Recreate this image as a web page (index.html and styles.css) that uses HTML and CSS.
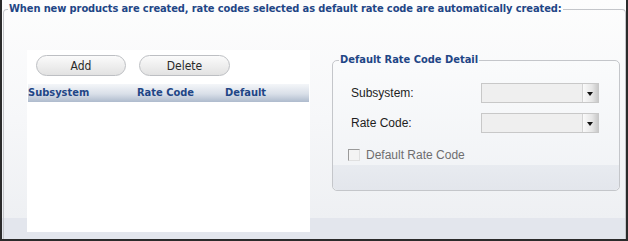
FILE: index.html
```html
<!DOCTYPE html>
<html lang="en">
<head>
    <meta charset="UTF-8">
    <title>Default Rate Codes</title>
    <link rel="stylesheet" href="styles.css">
</head>
<body>
    <div class="frame">
        <fieldset class="group">
            <legend>When new products are created, rate codes selected as default rate code are automatically created:</legend>

            <div class="columns">
                <!-- list of default rate codes -->
                <div class="list-panel">
                    <div class="toolbar">
                        <button class="pill">Add</button>
                        <button class="pill pill-wide">Delete</button>
                    </div>
                    <div class="grid-head">
                        <span class="col-sub">Subsystem</span>
                        <span class="col-rate">Rate Code</span>
                        <span class="col-def">Default</span>
                    </div>
                </div>

                <!-- detail editor -->
                <fieldset class="detail">
                    <legend>Default Rate Code Detail</legend>
                    <div class="detail-body">
                        <div class="field-row">
                            <label class="field-label">Subsystem:</label>
                            <div class="combo"><span class="combo-btn"></span></div>
                        </div>
                        <div class="field-row">
                            <label class="field-label">Rate Code:</label>
                            <div class="combo"><span class="combo-btn"></span></div>
                        </div>
                        <div class="check-row">
                            <span class="check-box"></span>
                            <span class="check-label">Default Rate Code</span>
                        </div>
                    </div>
                    <div class="detail-foot"></div>
                </fieldset>
            </div>
        </fieldset>
    </div>
</body>
</html>
```

FILE: styles.css
```css
/* Global */
html, body {
    margin: 0;
    padding: 0;
}

body {
    font-family: 'Liberation Sans', Arial, sans-serif;
    font-size: 12px;
    color: #222;
}

.frame {
    height: 239px;
    border-left: 2px solid #2b2b2b;
    border-right: 2px solid #2b2b2b;
    border-bottom: 2px solid #2b2b2b;
    background: linear-gradient(to bottom, #fdfdfd 0, #f6f7f9 120px, #eef0f3 218px, #e3e6ed 218px, #e3e6ed 100%);
    overflow: hidden;
}

/* Outer group box */
.group {
    margin: 1px 0 0 1px;
    padding: 33px 0 0 0;
    height: 240px;
    box-sizing: border-box;
    border: 1px solid #c4c6ca;
    border-bottom: none;
    border-radius: 4px 4px 0 0;
    min-width: 0;
}

.group > legend,
.detail > legend {
    font-family: 'DejaVu Sans Condensed', 'DejaVu Sans', sans-serif;
    font-weight: bold;
    font-size: 11px;
    line-height: 16px;
    color: #1f4686;
    padding: 0 1px;
    margin-left: 4px;
}

.group > legend {
    letter-spacing: -0.1px;
}

.detail > legend {
    margin-left: 6px;
}

.columns {
    display: flex;
    align-items: flex-start;
    gap: 22px;
    padding-left: 23px;
}

/* Left list */
.list-panel {
    width: 283px;
    height: 182px;
    background: #fff;
    flex: none;
}

.toolbar {
    display: flex;
    gap: 13px;
    padding: 5px 0 0 9px;
}

.pill {
    width: 90px;
    height: 21px;
    border: 1px solid #bdbfc3;
    border-radius: 11px;
    background: linear-gradient(to bottom, #fbfbfb, #ececec 60%, #e2e2e2);
    font-family: 'DejaVu Sans Condensed', 'DejaVu Sans', sans-serif;
    font-size: 12px;
    color: #2a2a2a;
    padding: 0;
}

.pill-wide {
    width: 91px;
}

.grid-head {
    display: flex;
    margin: 8px 1px 0 1px;
    height: 18px;
    line-height: 17px;
    background: linear-gradient(to bottom, #f4f6f9, #d9dfe8 55%, #aebbcd);
    font-family: 'DejaVu Sans Condensed', 'DejaVu Sans', sans-serif;
    font-weight: bold;
    font-size: 11px;
    color: #1f4686;
}

.col-sub { width: 109px; }
.col-rate { width: 88px; }

/* Right detail box */
.detail {
    margin: 2px 0 0 0;
    padding: 0;
    width: 288px;
    height: 139px;
    box-sizing: border-box;
    border: 1px solid #c4c6ca;
    border-radius: 5px;
    background: linear-gradient(to bottom, #fafbfc, #f0f2f5);
    min-width: 0;
    display: flex;
    flex-direction: column;
    overflow: hidden;
}

.detail-body {
    padding: 15px 0 0 18px;
    height: 82px;
}

.detail-foot {
    flex: 1;
    background: linear-gradient(to bottom, #e8ebf0, #e3e6ec);
}

.field-row {
    display: flex;
    align-items: center;
    height: 20px;
    margin-bottom: 10px;
}

.field-label {
    width: 130px;
    color: #1e1e1e;
}

.combo {
    position: relative;
    width: 116px;
    height: 18px;
    border: 1px solid #c8c8c8;
    background: #efefef;
}

.combo-btn {
    position: absolute;
    top: 0;
    right: 0;
    width: 15px;
    height: 18px;
    border-left: 1px solid #d4d4d4;
    background: linear-gradient(to right, #fafafa, #e6e6e6 60%, #c9c9c9);
}

.combo-btn::after {
    content: "";
    position: absolute;
    left: 4px;
    top: 8px;
    border-left: 3.5px solid transparent;
    border-right: 3.5px solid transparent;
    border-top: 4px solid #111;
}

.check-row {
    display: flex;
    align-items: center;
    margin-top: 15px;
    margin-left: -3px;
}

.check-box {
    width: 10px;
    height: 10px;
    border: 1px solid #9a9a9a;
    border-right-color: #e0e0e0;
    border-bottom-color: #e0e0e0;
    background: #f4f4f4;
    margin-right: 6px;
}

.check-label {
    color: #6e6e6e;
}
```
